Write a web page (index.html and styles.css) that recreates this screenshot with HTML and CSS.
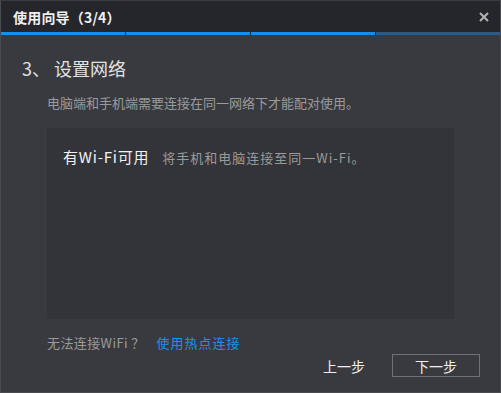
FILE: index.html
```html
<!DOCTYPE html>
<html>
<head>
<meta charset="utf-8">
<link rel="stylesheet" href="styles.css">
</head>
<body>
<div class="dialog">
  <div class="titlebar">
    <span class="title">使用向导（3/4）</span>
    <svg class="close" width="10" height="10" viewBox="0 0 10 10"><path d="M1 1 L9 9 M9 1 L1 9" stroke="#b4b4b4" stroke-width="2" fill="none"/></svg>
  </div>
  <div class="progress">
    <div class="seg on"></div>
    <div class="seg on"></div>
    <div class="seg on"></div>
    <div class="seg off"></div>
  </div>
  <div class="body">
    <div class="heading">3、 设置网络</div>
    <div class="sub">电脑端和手机端需要连接在同一网络下才能配对使用。</div>
    <div class="box">
      <div class="row">
        <span class="opt">有Wi-Fi可用</span>
        <span class="desc">将手机和电脑连接至同一Wi-Fi。</span>
      </div>
    </div>
    <div class="help">
      <span class="q">无法连接WiFi ？</span>
      <span class="link">使用热点连接</span>
    </div>
    <div class="actions">
      <span class="prev">上一步</span>
      <span class="next">下一步</span>
    </div>
  </div>
</div>
</body>
</html>
```

FILE: styles.css
```css
html, body {
  margin: 0;
  padding: 0;
  background: #393a3f;
}
body {
  font-family: "Noto Sans CJK SC", "Noto Sans", sans-serif;
  width: 501px;
  height: 393px;
  overflow: hidden;
}
.dialog {
  box-sizing: border-box;
  width: 501px;
  height: 393px;
  border: 1px solid #4a4b50;
  border-top-color: #3a3b40;
  background: #393a3f;
  display: flex;
  flex-direction: column;
}
.titlebar {
  height: 31px;
  background: #25262b;
  display: flex;
  align-items: center;
  justify-content: space-between;
  padding: 0 11px 0 12px;
}
.title {
  color: #f0f0f0;
  font-size: 14px;
  font-weight: bold;
  letter-spacing: 0.2px;
}
.close {
  display: block;
}
.progress {
  display: flex;
  gap: 1px;
  height: 3px;
  background: #25262b;
}
.seg { flex: 1; }
.seg.on { background: #1a8ee6; }
.seg.off { background: #2b5b86; }
.body {
  flex: 1;
  display: flex;
  flex-direction: column;
  padding: 0 0 0 46px;
}
.heading {
  color: #e2e2e2;
  font-size: 18px;
  margin: 21px 0 0 -25px;
  line-height: 24px;
}
.sub {
  color: #9a9a9a;
  font-size: 13px;
  line-height: 16px;
  margin-top: 15px;
}
.box {
  margin-top: 17px;
  width: 407px;
  height: 191px;
  background: #333439;
}
.row {
  display: flex;
  align-items: baseline;
  padding: 19px 0 0 16px;
}
.opt {
  color: #f2f2f2;
  font-size: 15px;
  line-height: 20px;
  letter-spacing: 0.8px;
}
.desc {
  color: #9a9a9a;
  font-size: 13px;
  margin-left: 13px;
  letter-spacing: 1px;
}
.help {
  margin-top: 16px;
  font-size: 13px;
  line-height: 16px;
}
.q { color: #9a9a9a; letter-spacing: 0.4px; }
.link { color: #1a93ee; margin-left: 9px; letter-spacing: 1px; }
.actions {
  display: flex;
  align-items: center;
  justify-content: flex-end;
  margin-top: 3px;
  padding-right: 20px;
}
.prev {
  color: #f0f0f0;
  font-size: 14px;
  margin-right: 27px;
}
.next {
  box-sizing: border-box;
  width: 88px;
  height: 23px;
  border: 1px solid #707176;
  color: #f0f0f0;
  font-size: 14px;
  display: flex;
  align-items: center;
  justify-content: center;
}
```
